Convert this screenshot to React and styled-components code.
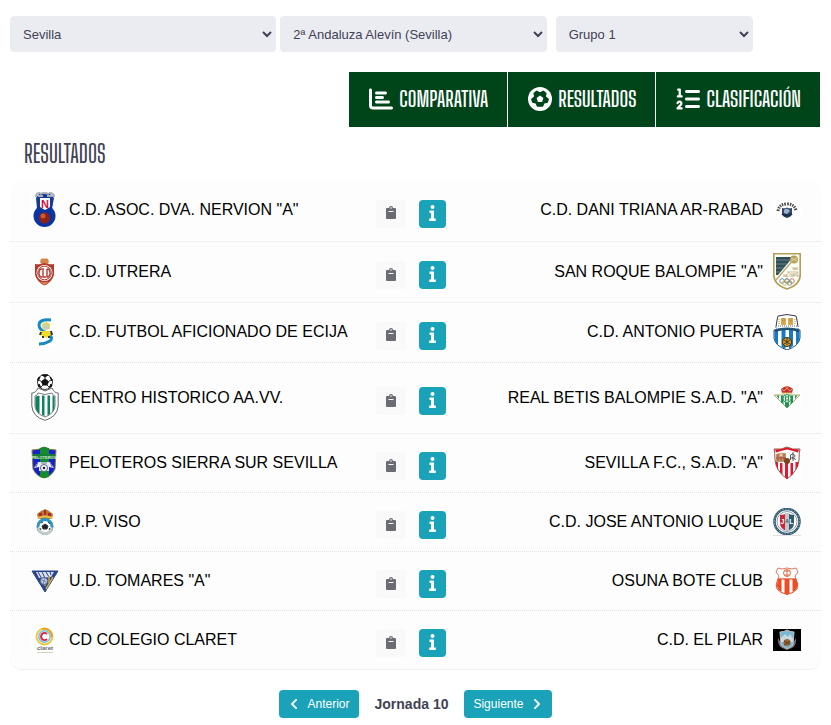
import React, { useState } from 'react'
import styled, { createGlobalStyle } from 'styled-components'
import { FaChartBar, FaListOl } from 'react-icons/fa6'
import { FaChevronLeft, FaChevronRight } from 'react-icons/fa'

const GlobalStyle = createGlobalStyle`
  * {
    box-sizing: border-box;
  }
  body {
    margin: 0;
    background: #fff;
    color: #3f4254;
    font-family: Arial, "Liberation Sans", sans-serif;
    font-size: 13px;
  }
`

const headingFont = '"Big Shoulders Display", Roboto, "Liberation Sans", sans-serif'

const Page = styled.main`
  padding: 16px 10px 8px;
`

const Filters = styled.form`
  display: grid;
  grid-template-columns: 4fr 4fr 3fr 1fr;
`

const Field = styled.label`
  display: block;
  padding-left: ${({ $inset }) => ($inset ? '5px' : '0')};
  padding-right: ${({ $inset }) => ($inset ? '0' : '4px')};
`

const Select = styled.select`
  width: 100%;
  height: 36px;
  padding: 0 0 0 8px;
  border: 1px solid #ebecf2;
  border-radius: 4px;
  background-color: #ebecf2;
  color: #3f4254;
  font-family: inherit;
  font-size: 13px;
`

const Tabs = styled.nav`
  display: flex;
  justify-content: flex-end;
  margin-top: 20px;
`

const Tab = styled.a`
  display: flex;
  align-items: center;
  gap: 6px;
  height: 55px;
  padding: 0 19px 2px 20px;
  border-right: 1px solid #fff;
  background: #00441a;
  color: #fff;
  font-family: ${headingFont};
  font-size: 22px;
  font-weight: 600;
  text-decoration: none;
  white-space: nowrap;

  svg {
    width: 24px;
    height: 24px;
  }
`

const Title = styled.h2`
  margin: 0;
  padding-left: 14px;
  font-family: ${headingFont};
  font-size: 24px;
  font-weight: 500;
  line-height: 53px;
`

const MatchList = styled.ul`
  margin: 0;
  padding: 0;
  list-style: none;
`

const Match = styled.li`
  display: grid;
  grid-template-columns: minmax(0, 1fr) auto minmax(0, 1fr);
  align-items: center;
  min-height: 59px;
  padding: 11px 0 12px;
  border-bottom: 1px dotted #e2e3ea;
  background: #fdfdfd;

  &:first-child {
    border-radius: 12px 12px 0 0;
  }
  &:last-child {
    border-radius: 0 0 12px 12px;
  }
`

const Team = styled.div`
  display: flex;
  flex-direction: ${({ $away }) => ($away ? 'row-reverse' : 'row')};
  align-items: center;
  gap: 10px;
  padding: ${({ $away }) => ($away ? '0 20px 0 0' : '0 0 0 21px')};
  color: #000;
  font-size: 16px;
  line-height: 20px;

  svg {
    display: block;
    flex: none;
  }
`

const Actions = styled.div`
  display: flex;
  gap: 13px;
  padding: 7px 9px 0 0;
`

const ActionButton = styled.button`
  display: flex;
  align-items: center;
  justify-content: center;
  width: ${({ $info }) => ($info ? '27px' : '30px')};
  height: 28px;
  margin: 0;
  padding: 0 0 2px;
  border: 0;
  border-radius: 4px;
  background: ${({ $info }) => ($info ? '#1aa2b8' : '#f9f9f9')};
  color: ${({ $info }) => ($info ? '#fff' : '#6a6b73')};
  cursor: pointer;
`

const Pager = styled.div`
  display: flex;
  align-items: center;
  justify-content: center;
  gap: 16px;
  margin-top: 20px;
`

const PagerButton = styled.button`
  display: flex;
  align-items: center;
  gap: 7px;
  height: 28px;
  padding: 0 9px;
  border: 0;
  border-radius: 4px;
  background: #1aa2b8;
  color: #fff;
  font-family: inherit;
  font-size: 12px;
  cursor: pointer;
`

const Round = styled.strong`
  font-size: 14px;
`

const BallIcon = () => (
  <svg viewBox="0 0 24 24" aria-hidden="true">
    <circle cx="12" cy="12" r="12" fill="#fff" />
    <path
      d="M12 5.2 15.4 3.6 18.6 6 18 9.4 21 12 19.8 15.8 16.4 16.4 15 19.8H9L7.6 16.4 4.2 15.8 3 12 6 9.4 5.4 6 8.6 3.6Z"
      fill="#00441a"
    />
    <path d="M12 8.4 15.4 10.9 14.1 14.9H9.9L8.6 10.9Z" fill="#fff" />
  </svg>
)

const ClipboardIcon = () => (
  <svg width="10" height="13" viewBox="0 0 10 13" aria-hidden="true">
    <rect y="2" width="10" height="11" rx="1" fill="currentColor" />
    <circle cx="5" cy="2" r="2" fill="currentColor" />
    <circle cx="5" cy="2" r=".8" fill="#f9f9f9" />
    <path d="M2.5 5.5h5" stroke="#f9f9f9" />
  </svg>
)

const InfoIcon = () => (
  <svg width="7" height="16" viewBox="0 0 7 16" aria-hidden="true">
    <circle cx="3.5" cy="2" r="2" fill="currentColor" />
    <path d="M.5 5.5H5v8h1.800V16H.2v-2.500H2V8H.5Z" fill="currentColor" />
  </svg>
)

const Crest = ({ h, children }) => (
  <svg width="28" height={h} viewBox={`0 0 28 ${h}`} aria-hidden="true">
    {children}
  </svg>
)

const Nervion = () => (
  <Crest h={38}>
    <path d="M0 0h28v38H0z" fill="#fff" />
    <path d="M5 7 8 3l5-1 6 1 4 4-2 11H6Z" fill="#123b9c" />
    <path d="M5 6q0-4 4-4M9 3q4-2 9 0M18 2q5 0 5 4M7 5h5M16 5h5" stroke="#a9aeb5" strokeWidth="2" fill="none" />
    <circle cx="13.5" cy="25" r="11" fill="#0b35a3" />
    <path d="M9 7h10v9l-5 3-5-3Z" fill="#fff" />
    <text x="14" y="17" textAnchor="middle" fontSize="11" fontWeight="700" fill="#d5123a">N</text>
    <circle cx="13.5" cy="27" r="5.5" fill="#8d2413" />
    <circle cx="12" cy="25" r="2.5" fill="#d5582c" />
  </Crest>
)

const Utrera = () => (
  <Crest h={28}>
    <path d="M10 6q-2-4 1-5.5h5Q19 2 17 6Z" fill="#d78348" />
    <path d="M4 6q5 1 9.500-1Q18 7 23 6v11q-2 7-9.500 10.500Q6 24 4 17Z" fill="#b53a2d" />
    <circle cx="13.5" cy="15" r="8" fill="#fff" />
    <circle cx="13.5" cy="15" r="6.8" fill="none" stroke="#b53a2d" />
    <path d="M11 11q-3 0-3 4t3 4M12 10v9h3M16 11v8q3 0 3-4t-3-4" fill="none" stroke="#b53a2d" strokeWidth="1.4" />
    <path d="M9 24h9l-4.500 3Z" fill="#d78348" />
  </Crest>
)

const Ecija = () => (
  <Crest h={28}>
    <path d="M0 0h28v28H0z" fill="#fff" />
    <path d="M20 2q-12-1-12 5 0 5 8 8 7 4 3 8-5 3-11 3" fill="none" stroke="#168ac3" strokeWidth="3" />
    <path d="M11 6q4-4 8 0v5h-8Z" fill="#e5dc55" />
    <circle cx="15" cy="9" r="3" fill="#c9cfb6" />
    <path d="M10 13h9l1 4-5 3-5-3Z" fill="#f3da23" />
    <path d="M10 14l-1 3M20 13l1 4M12 20v-2M18 20v-2" stroke="#303437" strokeWidth="2" />
  </Crest>
)

const Centro = () => (
  <Crest h={47}>
    <path d="M7 14Q5 19 .8 19v13q1 11 13.200 14.300Q26.200 43 27.200 32V19Q23 19 21 14l-7 3Z" fill="#fff" stroke="#63696a" />
    <path d="M7 19q-1 3-3 3v10q1 8 10 11 9-3 10-11V22q-2 0-3-3-7 3-14 0Z" fill="#fff" stroke="#777e7b" />
    <path d="M5 23l3-1v18q-3-4-3-8ZM11 21.500h2.500V42L11 41ZM16.500 21.500H19V40l-2.500 1.500ZM21.500 21.500l2 1V32q0 4-2 6.500Z" fill="#11805f" />
    <path d="M5 23l3-1v17q-3-3-3-7Z" stroke="#11805f" fill="#11805f" />
    <circle cx="14" cy="8" r="7.5" fill="#fff" stroke="#383838" />
    <path d="m14 5 3.500 2.500L16 11h-4l-1.500-3.500ZM11 1h6l-3 2ZM7 7l2-4-2 1Zm14 0-2-4 2 2ZM8 10l2 4-3-2Zm12 0-2 4 3-2Z" fill="#111" stroke="#111" />
    <path d="m14 5V3m3.500 4.500L20 6M16 11l2 2m-6-2-2 2m.5-5.500L8 6" stroke="#333" />
  </Crest>
)

const Peloteros = () => (
  <Crest h={34}>
    <path d="M0 2h28v32H0z" fill="#fff" />
    <path d="M1 4q7 0 12-3 5 3 12 3l-1 19q-3 7-11 9Q5 30 2 23Z" fill="#1920d0" stroke="#7b8437" />
    <path d="M9 2l4-1 5 1v29l-5 1-4-1Z" fill="#158c2c" />
    <path d="M2 8h22v5H2Z" fill="#137f34" />
    <text x="13" y="12.500" textAnchor="middle" fontSize="4" fontWeight="700" fill="#d9e9d4">PELOTEROS</text>
    <path d="M3 22l4-6h12l4 6-5-1v4H8v-4Z" fill="#e6eaf3" />
    <path d="m7 16-2 5m14-5 2 5M10 17h6" stroke="#697697" />
    <circle cx="13" cy="22" r="3.5" fill="#fff" stroke="#526080" />
    <circle cx="13" cy="22" r="1.3" fill="#182038" />
  </Crest>
)

const Viso = () => (
  <Crest h={28}>
    <path d="M0 0h28v28H0z" fill="#fff" />
    <path d="M7 11 6 6l4-3 4-2 4 2 4 3-1 5Z" fill="#b37a2c" />
    <path d="M8 5h3v3H8Zm5-3h2v5h-2Zm4 3h3v3h-3Z" fill="#b82330" />
    <path d="M7 10q7-3 14 0" fill="none" stroke="#e8bd4c" strokeWidth="2" />
    <circle cx="14" cy="18.5" r="8.5" fill="#2c93c5" />
    <path d="M6 20q8-6 16 0-1 7-8 7t-8-7Z" fill="#c2cbc6" />
    <circle cx="14" cy="18.5" r="5.5" fill="#fff" />
    <path d="m14 16 3 2-1 3h-4l-1-3ZM10 15l2-1M17 14l2 2M9 20l1 2M18 22l1-2" fill="#222" stroke="#353a40" />
  </Crest>
)

const Tomares = () => (
  <Crest h={24}>
    <path d="M1 2h26L14 23Z" fill="#29448a" stroke="#29448a" />
    <path d="M5 3h18l-3 5-12 1Z" fill="#d9dfeb" />
    <path d="m7 3 4 7m0-7 3 6m1-6 3 5m1-5 1 3" stroke="#29448a" />
    <path d="m15 20 7-12M14 17V9M18 14V7" stroke="#c5a74d" strokeWidth="1.5" />
    <circle cx="13" cy="12" r="3.5" fill="#c8d1df" stroke="#536999" />
    <path d="m11 11 4 2m-1-4-2 6" stroke="#7383a0" />
  </Crest>
)

const Claret = () => (
  <Crest h={28}>
    <path d="M0 0h28v28H0z" fill="#fff" />
    <circle cx="13.5" cy="10.5" r="8" fill="none" stroke="#f2c432" strokeWidth="1.8" />
    <path d="M11 3a8 8 0 0 1 10 8" fill="none" stroke="#ee9b25" strokeWidth="1.8" />
    <circle cx="13.5" cy="10.5" r="5.7" fill="none" stroke="#6dc3de" strokeWidth="1.6" />
    <path d="M16 8a3.500 3.500 0 1 0 0 5" fill="none" stroke="#dd2447" strokeWidth="2" />
    <text x="14" y="24" textAnchor="middle" fontSize="6" fontWeight="700" fill="#67686c">claret</text>
    <path d="M6 26.500h16" stroke="#d9d3b9" />
  </Crest>
)

const Triana = () => (
  <Crest h={18}>
    <path d="M0 0h28v18H0z" fill="#fff" />
    <path d="M5 10q1-7 9-7t9 7" fill="none" stroke="#4a4c50" strokeWidth="3" strokeDasharray="1.5 1" />
    <path d="M9 7q5 1 5-1 0 2 5 1v5q0 4-5 5-5-1-5-5Z" fill="#354769" />
    <path d="M11 9q3-3 6 1l-3 3-3-1Z" fill="#9ab1cf" />
    <path d="M9 13q5 3 10 0" fill="none" stroke="#1f2c48" strokeWidth="2" />
  </Crest>
)

const SanRoque = () => (
  <Crest h={37}>
    <path d="M.8.8h26.400V22Q27 32 14 36 1 32 .8 22Z" fill="#fdfdf8" stroke="#b49f55" strokeWidth="1.6" />
    <path d="M3 4h17L5 22H3Z" fill="#295452" />
    <path d="M3 7h14M3 11h11M3 15h8M3 19h4" stroke="#7f72a0" />
    <path d="M21 6 3 27" stroke="#baa867" strokeWidth="1.3" />
    <circle cx="21" cy="6.5" r="4" fill="#b6a25c" />
    <path d="M18 5q3 3 6 0M18 8q3-3 6 0" fill="none" stroke="#dfd5a7" />
    <text x="22" y="17" textAnchor="middle" fontSize="3" fill="#a18b45">SAN</text>
    <text x="20" y="20.500" textAnchor="middle" fontSize="3" fill="#a18b45">ROQUE</text>
    <text x="18" y="24" textAnchor="middle" fontSize="3" fill="#a18b45">BALOMPIE</text>
    <g fill="none">
      <circle cx="9" cy="28" r="2.3" stroke="#6d91be" />
      <circle cx="14" cy="28" r="2.3" stroke="#666" />
      <circle cx="19" cy="28" r="2.3" stroke="#cf7777" />
      <circle cx="11.5" cy="30" r="2.3" stroke="#d6bf67" />
      <circle cx="16.5" cy="30" r="2.3" stroke="#79a281" />
    </g>
  </Crest>
)

const Puerta = () => (
  <Crest h={36}>
    <path d="M5 2q9-3 18 0l1 4 1 7H3l1-7Z" fill="#fff" stroke="#383f45" />
    <path d="M8 4h5v7H8Zm7 0h5v7h-5Z" fill="#dfa84a" />
    <path d="M9 6h3M16 6h3M10 4v6M18 4v6M6 5v6M22 5v6" stroke="#a58a50" strokeDasharray="1 1" />
    <path d="M3 12h22v3H3Z" fill="#fff" stroke="#5b7182" strokeDasharray="1 1" />
    <path d="M1 16q13-4 26 0v8q-1 8-13 12Q2 32 1 24Z" fill="#fff" stroke="#28516e" />
    <path d="M1.500 16.500 5 15.500V31q-3.500-3-3.500-7ZM8.500 15h4v20l-4-2ZM16 15h4v17l-4 3ZM23 15.500l3.500 1V24q0 4-3.500 7Z" fill="#167ac2" />
    <path d="M2 17q12-4 24 0" fill="none" stroke="#1b4d73" strokeWidth="2" />
    <circle cx="14" cy="28" r="4.5" fill="#d99b24" stroke="#352e21" />
    <path d="m11 26 6 4m0-4-6 4m3-6v7" stroke="#4b3a21" />
  </Crest>
)

const Betis = () => (
  <Crest h={23}>
    <path d="M0 0h28v23H0z" fill="#fff" />
    <path d="M1 9h26L14 22Z" fill="#fff" stroke="#b9a762" />
    <path d="M3.500 9.500H6V13ZM8 9.500h2.500v9L8 16ZM12 9.500h4V20l-2 2-2-2ZM17.500 9.500H20V16l-2.500 2.500ZM22 9.500h2.500L22 13Z" fill="#18965a" />
    <circle cx="14" cy="12.5" r="4" fill="#e5f1df" stroke="#32975e" />
    <path d="M12 11h4m-4 3h4M12.500 9.500v6m3-6v6" stroke="#2c9860" />
    <path d="M9 7 8 3l3-2 3-1 3 1 3 2-1 4Z" fill="#c9303c" />
    <path d="M9 7h10M9 3l2 2 3-3 3 3 2-2M14 0v2" stroke="#d6ae48" fill="none" />
  </Crest>
)

const SevillaFc = () => (
  <Crest h={34}>
    <path d="M0 2h28v32H0z" fill="#fff" />
    <path d="M1 3q8 1 13-2 5 3 13 2-1 4-1 11-1 11-12 19Q3 25 2 14 2 7 1 3Z" fill="#fff" stroke="#8b5948" />
    <path d="M2 3.500q7 0 12-2 5 2 12 2l-1 3q-6-2-11-3-5 1-11 3Z" fill="#dc1429" />
    <path d="M3 16h2v8l-2-5ZM7 17h2.500v12L7 26ZM12 17h3v15l-1 1-2-2ZM17.500 17H20v11l-2.500 2ZM22.500 16h2.500v4l-2.500 4Z" fill="#e01932" />
    <path d="M3 8q5-2 10-1v9H3Z" fill="#c79a6e" />
    <path d="M5 8v7m3-7v7m3-7v7M3 12h10" stroke="#9f4e40" />
    <circle cx="8" cy="9" r="1.5" fill="#e7c9a5" />
    <path d="M20 6v9M17.500 14V9q2-2 4 0t-3 3q3-1 4 2" fill="none" stroke="#555" />
    <circle cx="14" cy="15" r="3" fill="#7d421d" />
  </Crest>
)

const Luque = () => (
  <Crest h={28}>
    <circle cx="14" cy="13.5" r="12.5" fill="#fff" stroke="#315b70" strokeWidth="2.5" />
    <circle cx="14" cy="13.5" r="12.5" fill="none" stroke="#b7c6cd" strokeDasharray="1 2" />
    <circle cx="14" cy="13.5" r="10" fill="#fff" stroke="#8ea0aa" />
    <path d="M7 7q4 0 7-2v18q-7-2-7-8Z" fill="#cb263a" />
    <path d="M14 5q3 2 7 2v8q0 6-7 8Z" fill="#315a70" />
    <path d="M12 5h4v18h-4Z" fill="#c2c8cc" />
    <text x="9.500" y="16" textAnchor="middle" fontSize="7" fontWeight="700" fill="#fff">J</text>
    <text x="14" y="15" textAnchor="middle" fontSize="5" fontWeight="700" fill="#315a70">A</text>
    <text x="18.500" y="16" textAnchor="middle" fontSize="7" fontWeight="700" fill="#fff">L</text>
    <path d="M0 27.500h28" stroke="#dfe1e3" />
  </Crest>
)

const Osuna = () => (
  <Crest h={28}>
    <path d="m5 1 4 1 5-1 5 1 4-1 2 4-3 4 1 3H5l1-3-3-4Z" fill="#fff" stroke="#de7a5d" />
    <circle cx="14" cy="6" r="3.5" fill="none" stroke="#df7150" />
    <path d="M11 4h6m-6 4h6M14 3v7" stroke="#df7150" />
    <path d="M5 12h18q3 5 1 10-3 4-10 5.500Q7 26 4 22q-2-5 1-10Z" fill="#fff" stroke="#e8502c" />
    <path d="M5 12h3.500v13Q4 23 4 18ZM11.500 12h5v14.500l-2.500 1-2.500-1ZM19.500 12H23l1.500 5q0 6-5 8Z" fill="#ef4c23" />
  </Crest>
)

const Pilar = () => (
  <Crest h={22}>
    <path d="M0 0h28v22H0z" fill="#000" />
    <path d="M5 9q-1 7 4 10l5 2 5-2q5-3 4-10l-3 5H8Z" fill="#716978" />
    <path d="M7 3q4 0 7-2 3 2 7 2l-1 13-6 4-6-4Z" fill="#79b8d2" stroke="#c5c5c5" />
    <path d="m8 9 4-4 3 3 2-3 3 5v3H8Z" fill="#c9dadf" />
    <circle cx="14" cy="13.5" r="3.5" fill="#9e642f" />
    <path d="m11 12 6 3m0-3-6 4" stroke="#593d28" />
    <path d="M7 17q7 4 14 0" fill="none" stroke="#aaa4aa" strokeDasharray="1 1" />
  </Crest>
)

const matches = [
  { home: 'C.D. ASOC. DVA. NERVION "A"', HomeCrest: Nervion, away: 'C.D. DANI TRIANA AR-RABAD', AwayCrest: Triana },
  { home: 'C.D. UTRERA', HomeCrest: Utrera, away: 'SAN ROQUE BALOMPIE "A"', AwayCrest: SanRoque },
  { home: 'C.D. FUTBOL AFICIONADO DE ECIJA', HomeCrest: Ecija, away: 'C.D. ANTONIO PUERTA', AwayCrest: Puerta },
  { home: 'CENTRO HISTORICO AA.VV.', HomeCrest: Centro, away: 'REAL BETIS BALOMPIE S.A.D. "A"', AwayCrest: Betis },
  { home: 'PELOTEROS SIERRA SUR SEVILLA', HomeCrest: Peloteros, away: 'SEVILLA F.C., S.A.D. "A"', AwayCrest: SevillaFc },
  { home: 'U.P. VISO', HomeCrest: Viso, away: 'C.D. JOSE ANTONIO LUQUE', AwayCrest: Luque },
  { home: 'U.D. TOMARES "A"', HomeCrest: Tomares, away: 'OSUNA BOTE CLUB', AwayCrest: Osuna },
  { home: 'CD COLEGIO CLARET', HomeCrest: Claret, away: 'C.D. EL PILAR', AwayCrest: Pilar },
]

const MatchRow = ({ match }) => {
  const { home, HomeCrest, away, AwayCrest } = match

  return (
    <Match>
      <Team>
        <HomeCrest />
        <span>{home}</span>
      </Team>
      <Actions>
        <ActionButton type="button" aria-label="Acta">
          <ClipboardIcon />
        </ActionButton>
        <ActionButton type="button" aria-label="Información" $info>
          <InfoIcon />
        </ActionButton>
      </Actions>
      <Team $away>
        <AwayCrest />
        <span>{away}</span>
      </Team>
    </Match>
  )
}

const App = () => {
  const [round, setRound] = useState(10)

  return (
    <>
      <GlobalStyle />
      <Page>
        <Filters>
          <Field>
            <Select aria-label="Provincia">
              <option>Sevilla</option>
            </Select>
          </Field>
          <Field>
            <Select aria-label="Competición">
              <option>2ª Andaluza Alevín (Sevilla)</option>
            </Select>
          </Field>
          <Field $inset>
            <Select aria-label="Grupo">
              <option>Grupo 1</option>
            </Select>
          </Field>
        </Filters>

        <Tabs>
          <Tab href="#comparativa"><FaChartBar />COMPARATIVA</Tab>
          <Tab href="#resultados"><BallIcon />RESULTADOS</Tab>
          <Tab href="#clasificacion"><FaListOl />CLASIFICACIÓN</Tab>
        </Tabs>

        <Title>RESULTADOS</Title>
        <MatchList>
          {matches.map((match) => (
            <MatchRow key={match.home} match={match} />
          ))}
        </MatchList>

        <Pager>
          <PagerButton type="button" onClick={() => setRound(round - 1)}>
            <FaChevronLeft size={12} />
            Anterior
          </PagerButton>
          <Round>Jornada {round}</Round>
          <PagerButton type="button" onClick={() => setRound(round + 1)}>
            Siguiente
            <FaChevronRight size={12} />
          </PagerButton>
        </Pager>
      </Page>
    </>
  )
}

export default App
